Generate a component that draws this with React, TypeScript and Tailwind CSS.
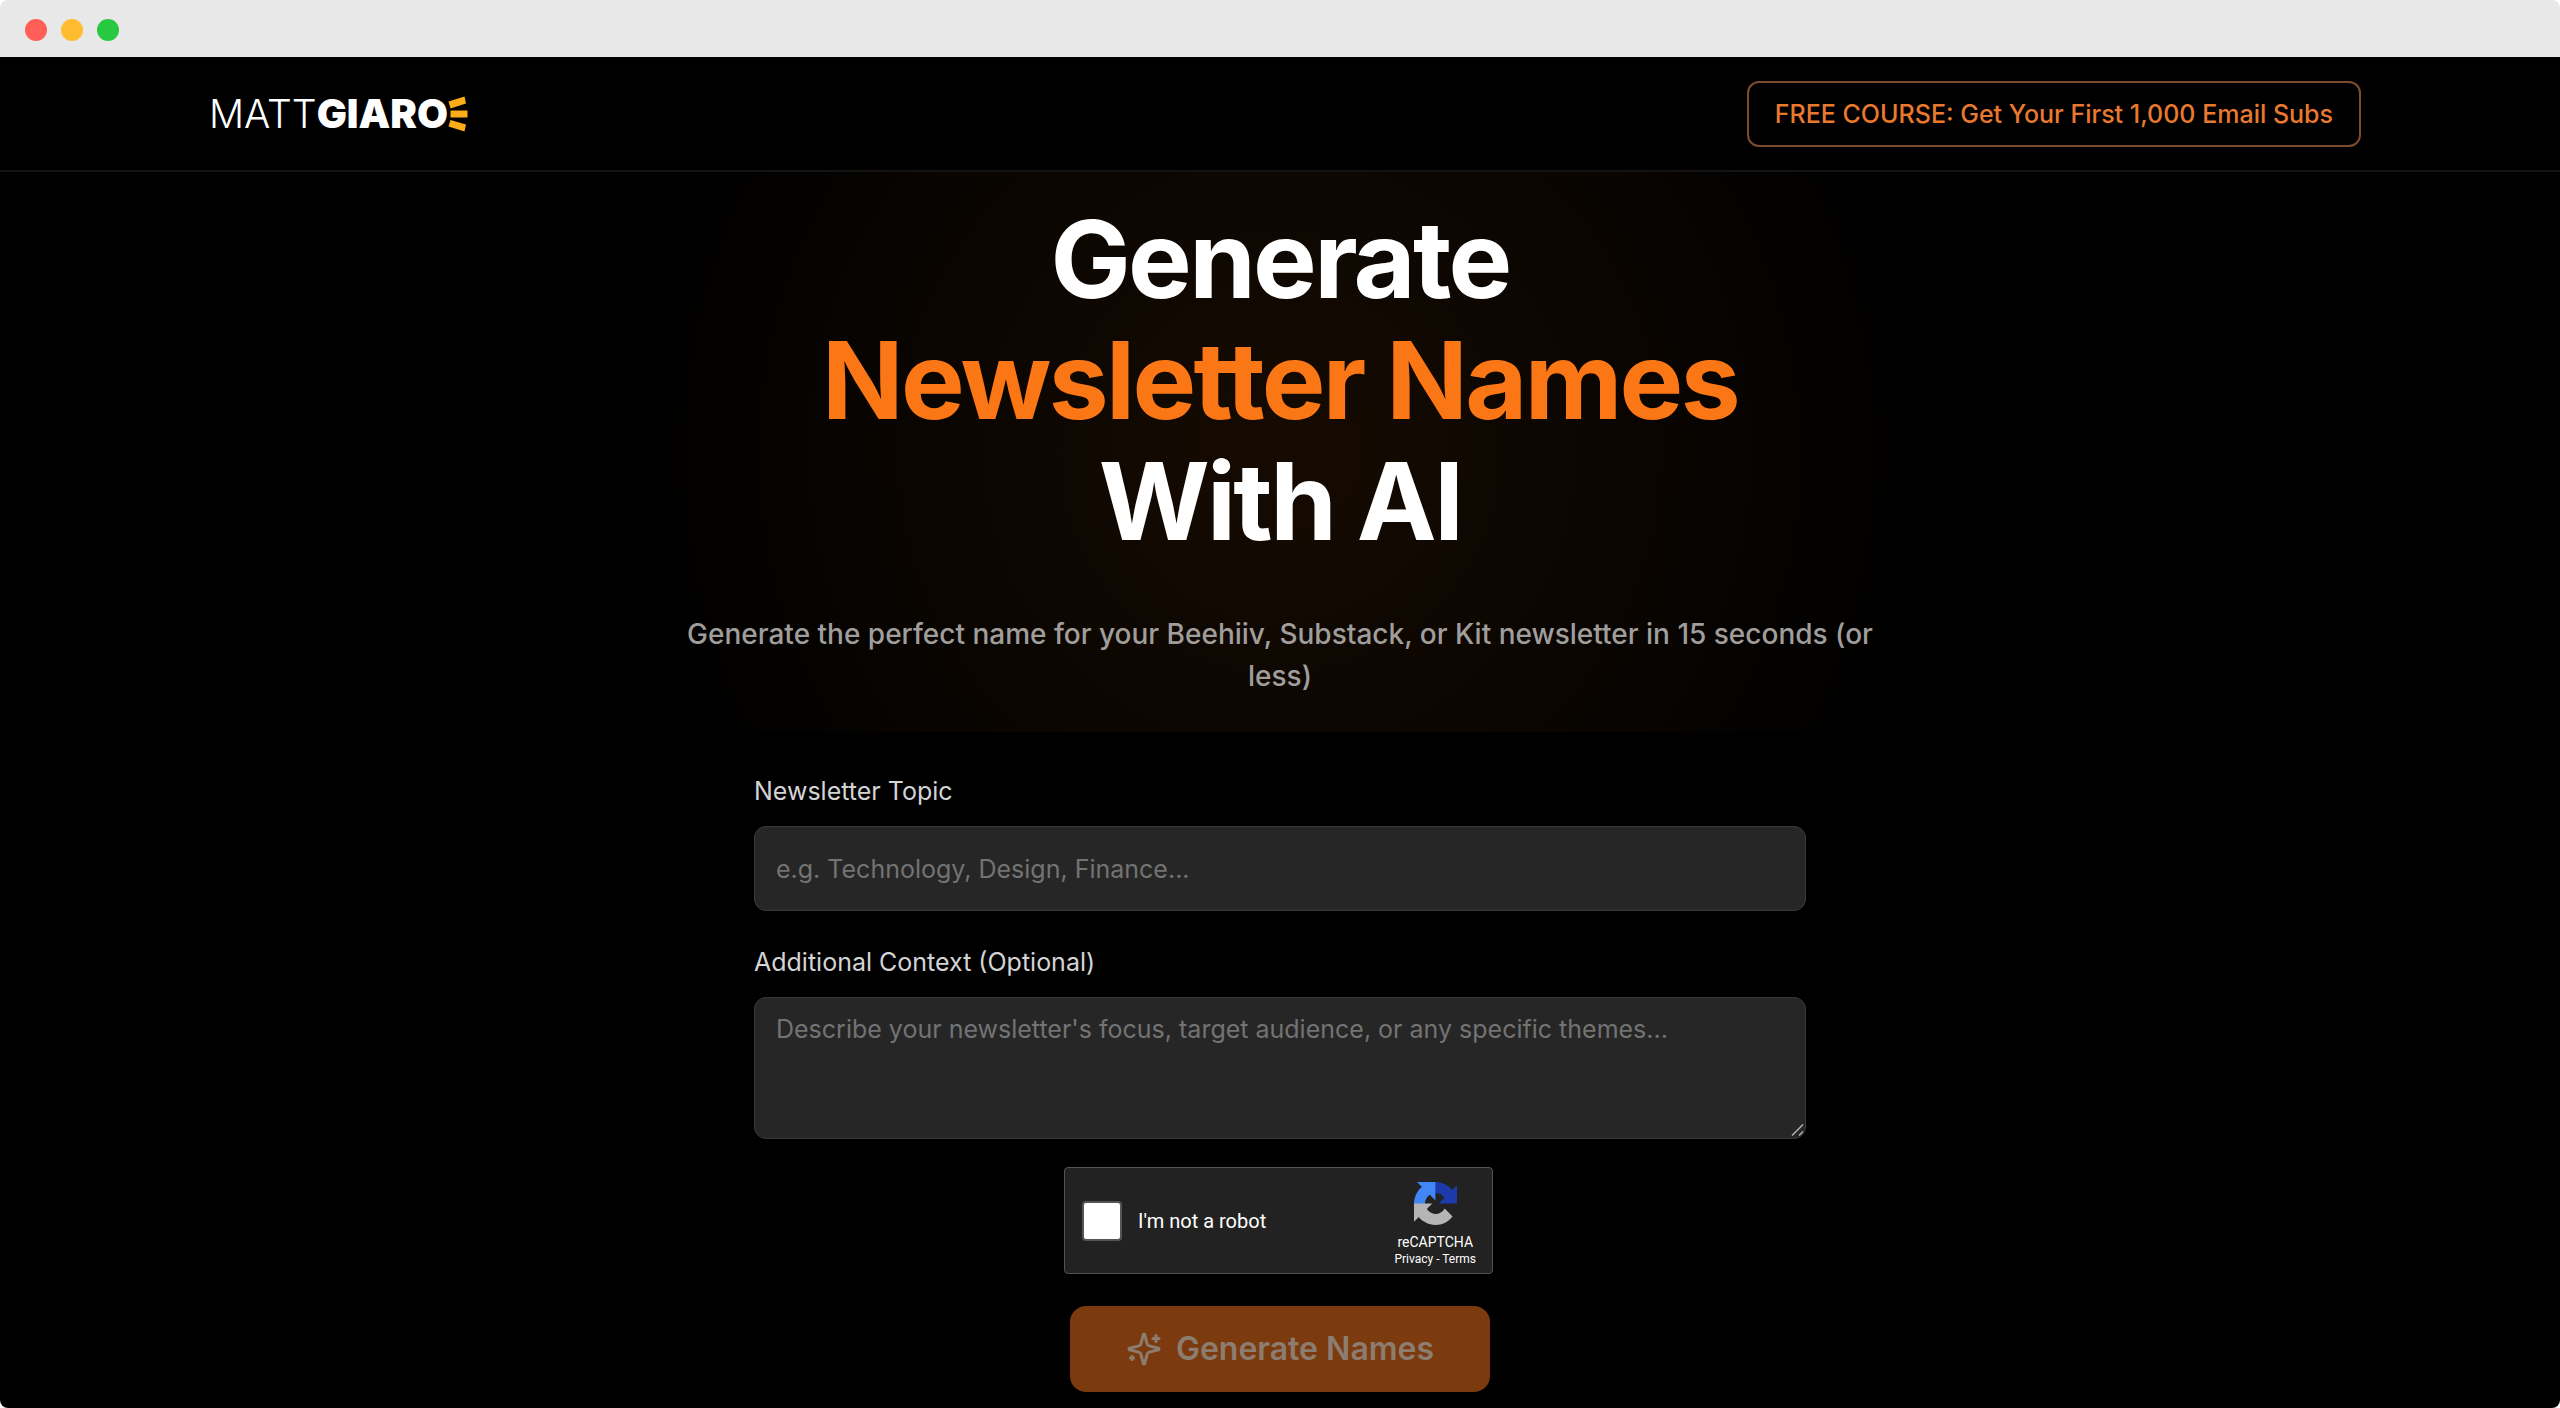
function TrafficLights() {
  return (
    <div className="flex h-[57px] items-center gap-[14px] rounded-t-lg bg-[#e8e8e8] px-[25px] pt-[3px]">
      <span className="size-[22px] rounded-full bg-[#ff5f57]" />
      <span className="size-[22px] rounded-full bg-[#febc2e]" />
      <span className="size-[22px] rounded-full bg-[#28c840]" />
    </div>
  );
}

function Logo() {
  return (
    <a href="#" aria-label="Matt Giaro" className="flex items-center pl-[10px] leading-[48px] text-white">
      <span className="flex items-baseline">
        <span className="text-[39px] font-light">MATT</span>
        <span className="text-[40px] font-black">GIARO</span>
      </span>
      <svg viewBox="0 0 20 36" className="h-9 w-5" fill="#fbac18" aria-hidden="true">
        <path d="M0.5 5.5 16.5 0.5 18 7.5 2.5 12.5Z" />
        <path d="M2.5 14.5H19.5V21.5H2.5Z" />
        <path d="M2.5 24 18 28.5 16.5 35.5 0.5 30.5Z" />
      </svg>
    </a>
  );
}

function Header() {
  return (
    <header className="border-b-2 border-[#141414]">
      <div className="mx-auto flex h-[113px] max-w-[2162px] items-center justify-between">
        <Logo />
        <a
          href="#course"
          className="rounded-xl border-2 border-[#7f4b30] px-[26px] py-[13px] text-[25px] font-medium leading-9 text-[#e8792f]"
        >
          FREE COURSE: Get Your First 1,000 Email Subs
        </a>
      </div>
    </header>
  );
}

function Hero() {
  return (
    <section className="bg-[radial-gradient(circle_660px_at_center,#160b02,#000000)] pt-[27px] pb-[35px] text-center">
      <h1 className="text-[107px] font-bold leading-[121px] tracking-tight text-white">
        Generate
        <span className="block text-[#fb7716]">Newsletter Names</span>
        With AI
      </h1>
      <p className="mx-auto mt-[51px] max-w-[1220px] text-[28px] font-medium leading-[42px] text-[#a09e9c]">
        Generate the perfect name for your Beehiiv, Substack, or Kit newsletter in 15 seconds (or less)
      </p>
    </section>
  );
}

function RecaptchaMark() {
  return (
    <svg viewBox="0 0 64 64" className="size-[43px]" aria-hidden="true">
      <path
        fill="#1c3aa9"
        d="M64 31.955l-.033-1.37V4.687l-7.16 7.16C50.948 4.674 42.033.093 32.05.093c-10.4 0-19.622 4.96-25.458 12.64l11.736 11.86a15.55 15.55 0 0 1 4.754-5.334c2.05-1.6 4.952-2.906 8.968-2.906.485 0 .86.057 1.135.163 4.976.393 9.288 3.14 11.828 7.124l-8.307 8.307L64 31.953"
      />
      <path
        fill="#4285f4"
        d="M31.862.094l-1.37.033H4.594l7.16 7.16C4.58 13.147 0 22.06 0 32.046c0 10.4 4.96 19.622 12.64 25.458L24.5 45.768a15.55 15.55 0 0 1-5.334-4.754c-1.6-2.05-2.906-4.952-2.906-8.968 0-.485.057-.86.163-1.135.393-4.976 3.14-9.288 7.124-11.828l8.307 8.307L31.86.095"
      />
      <path
        fill="#b5b5b5"
        d="M.001 32.045l.033 1.37v25.898l7.16-7.16c5.86 7.173 14.774 11.754 24.76 11.754 10.4 0 19.622-4.96 25.458-12.64l-11.736-11.86a15.55 15.55 0 0 1-4.754 5.334c-2.05 1.6-4.952 2.906-8.968 2.906-.485 0-.86-.057-1.135-.163-4.976-.393-9.288-3.14-11.828-7.124l8.307-8.307c-10.522.04-22.4.066-27.295-.005"
      />
    </svg>
  );
}

function Recaptcha() {
  return (
    <div className="mx-auto mt-7 w-[432px]">
      <div className="flex h-[107px] w-[429px] items-center justify-between rounded-[4px] border border-[#525252] bg-[#222222] pr-4 pl-[17px] font-['Roboto',sans-serif] text-white">
        <label className="flex items-center gap-4 text-[20px] leading-6">
          <input
            type="checkbox"
            className="size-10 appearance-none rounded-[4px] border-2 border-[#555555] bg-white"
          />
          I&apos;m not a robot
        </label>
        <div className="flex flex-col items-center pt-2">
          <RecaptchaMark />
          <span className="mt-2 text-[14px] leading-[18px]">reCAPTCHA</span>
          <span className="text-[12px] leading-4">
            <a href="#privacy">Privacy</a>
            {" - "}
            <a href="#terms">Terms</a>
          </span>
        </div>
      </div>
    </div>
  );
}

function SparklesIcon() {
  return (
    <svg
      viewBox="0 0 24 24"
      className="size-[36px]"
      fill="none"
      stroke="currentColor"
      strokeWidth="2"
      strokeLinecap="round"
      strokeLinejoin="round"
      aria-hidden="true"
    >
      <path d="M9.937 15.5A2 2 0 0 0 8.5 14.063l-6.135-1.582a.5.5 0 0 1 0-.962L8.5 9.936A2 2 0 0 0 9.937 8.5l1.582-6.135a.5.5 0 0 1 .963 0L14.063 8.5A2 2 0 0 0 15.5 9.937l6.135 1.581a.5.5 0 0 1 0 .964L15.5 14.063a2 2 0 0 0-1.437 1.437l-1.582 6.135a.5.5 0 0 1-.963 0z" />
      <path d="M20 3v4" />
      <path d="M22 5h-4" />
      <path d="M4 17v2" />
      <path d="M5 18H3" />
    </svg>
  );
}

function ResizeGrip() {
  return (
    <svg
      viewBox="0 0 14 14"
      className="pointer-events-none absolute right-px bottom-[2px] size-[14px]"
      fill="none"
      stroke="#b5b5b5"
      strokeWidth="1.5"
      aria-hidden="true"
    >
      <path d="M1 12.5 12 1.5" />
      <path d="M8 12.5 12 8.5" />
    </svg>
  );
}

function NameForm() {
  return (
    <form className="mx-auto max-w-[1052px] pt-[41px] pb-4 text-[25px] leading-9">
      <label htmlFor="topic" className="block text-[#d4d4d4]">
        Newsletter Topic
      </label>
      <input
        id="topic"
        type="text"
        placeholder="e.g. Technology, Design, Finance..."
        className="mt-[17px] block h-[85px] w-full rounded-xl border border-[#3a3a3a] bg-[#262626] px-[21px] text-white placeholder:text-[#737373]"
      />
      <label htmlFor="context" className="mt-[33px] block text-[#d4d4d4]">
        Additional Context (Optional)
      </label>
      <div className="relative mt-[17px]">
        <textarea
          id="context"
          placeholder="Describe your newsletter's focus, target audience, or any specific themes..."
          className="block h-[142px] w-full resize-none rounded-xl border border-[#3a3a3a] bg-[#262626] px-[21px] py-[13px] text-white placeholder:text-[#737373]"
        />
        <ResizeGrip />
      </div>
      <Recaptcha />
      <button
        type="button"
        className="mx-auto mt-8 flex h-[86px] w-[420px] items-center justify-center gap-[14px] rounded-2xl bg-[#7c3a0f] text-[32px] font-semibold leading-10 text-[#8c7d70]"
      >
        <SparklesIcon />
        Generate Names
      </button>
    </form>
  );
}

export default function App() {
  return (
    <div className="min-h-screen bg-white font-['Inter',sans-serif]">
      <TrafficLights />
      <main className="rounded-b-lg bg-black">
        <Header />
        <Hero />
        <NameForm />
      </main>
    </div>
  );
}
